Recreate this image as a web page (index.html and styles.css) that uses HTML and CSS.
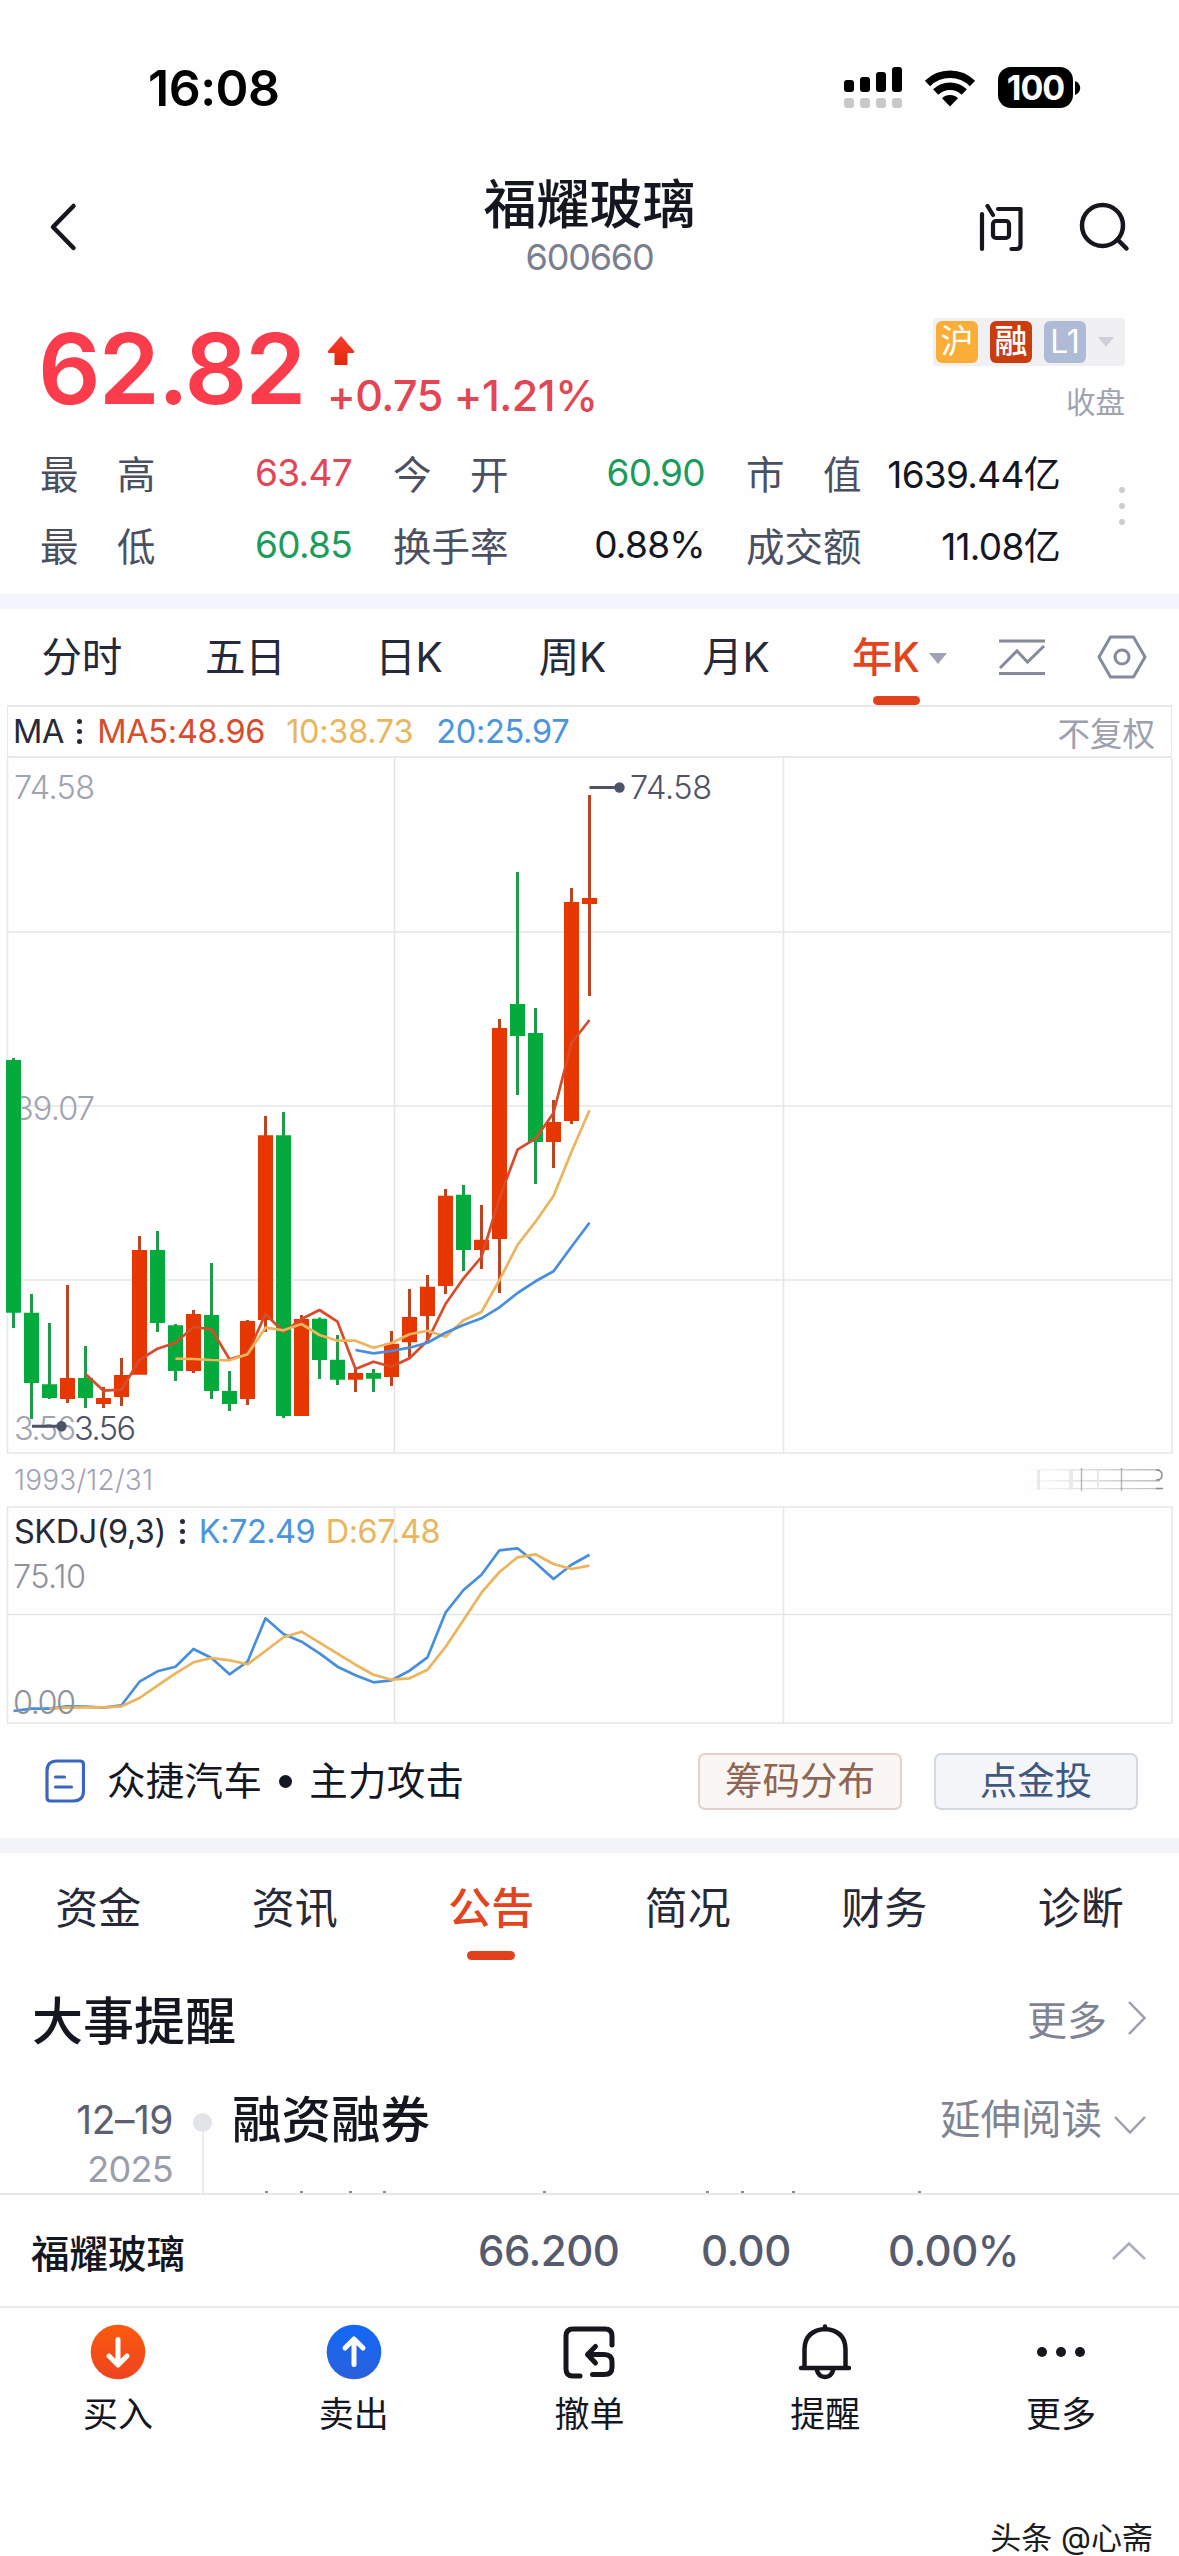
FILE: index.html
```html
<!DOCTYPE html>
<html lang="zh-CN">
<head>
<meta charset="utf-8">
<title>福耀玻璃 600660</title>
<link rel="stylesheet" href="styles.css">
</head>
<body>
<div class="app">
  <div class="status">
    <span class="clock">16:08</span>
    <div class="status-icons">
      <svg class="signal" width="58" height="41" viewBox="0 0 58 41">
        <rect x="0" y="13" width="10" height="12" rx="3"/><rect x="16" y="10" width="10" height="15" rx="3"/><rect x="32" y="5" width="10" height="20" rx="3"/><rect x="48" y="0" width="10" height="25" rx="3"/>
        <g fill="#c8c8c8"><rect x="0" y="31" width="10" height="10" rx="3"/><rect x="16" y="31" width="10" height="10" rx="3"/><rect x="32" y="31" width="10" height="10" rx="3"/><rect x="48" y="31" width="10" height="10" rx="3"/></g>
      </svg>
      <svg class="wifi" width="52" height="38" viewBox="0 0 52 38">
        <g fill="none" stroke="#000" stroke-width="7.5"><path d="M3.5 14.5a32 32 0 0 1 45 0"/><path d="M11.7 23a20.5 20.5 0 0 1 28.6 0"/></g>
        <path d="M26 37.5l-8-8.2a11.5 11.5 0 0 1 16 0z"/>
      </svg>
      <div class="battery">100</div>
      <svg class="nub" width="6" height="14" viewBox="0 0 6 14"><path d="M0 0c7 3 7 11 0 14z"/></svg>
    </div>
  </div>

  <header class="header">
    <svg class="back" width="30" height="50" viewBox="0 0 30 50"><path d="M25.500 4L5 25l20.500 21" fill="none" stroke="#15171c" stroke-width="4.500" stroke-linecap="round" stroke-linejoin="round"/></svg>
    <div class="title"><h1>福耀玻璃</h1><span>600660</span></div>
    <div class="header-tools">
      <svg width="48" height="50" viewBox="0 0 48 50" fill="none" stroke="#15171c" stroke-width="4.200" stroke-linecap="round" stroke-linejoin="round"><path d="M5 12v35M10.500 4l5.500 9M21 7h22.500v36q0 4-4 4h-5"/><rect x="16" y="19" width="16" height="17" rx="3"/></svg>
      <svg width="52" height="50" viewBox="0 0 52 50" fill="none" stroke="#15171c" stroke-width="4.500" stroke-linecap="round"><circle cx="23.500" cy="23.500" r="20.500"/><path d="M38.500 37.500l9 9"/></svg>
    </div>
  </header>

  <section class="quote">
    <div class="quote-top">
      <div class="price">62.82</div>
      <div class="change">
        <svg width="28" height="31" viewBox="0 0 28 31"><defs><linearGradient id="up" x2="0" y2="1"><stop offset="0" stop-color="#ff3b30"/><stop offset="1" stop-color="#dc2a08"/></linearGradient></defs><path d="M14 0l13 15q1 2-2 2h-4.500v12h-13V17H3q-3 0-2-2z" fill="url(#up)"/></svg>
        <span>+0.75 +1.21%</span>
      </div>
      <div class="quote-side">
        <div class="tags"><i class="tag hu">沪</i><i class="tag rong">融</i><i class="tag lv">L1</i><b class="tri"></b></div>
        <span>收盘</span>
      </div>
    </div>
    <div class="stats">
      <div class="stat"><span>最　高</span><b class="up">63.47</b></div>
      <div class="stat"><span>今　开</span><b class="down">60.90</b></div>
      <div class="stat"><span>市　值</span><b>1639.44亿</b></div>
      <div class="stat"><span>最　低</span><b class="down">60.85</b></div>
      <div class="stat"><span>换手率</span><b>0.88%</b></div>
      <div class="stat"><span>成交额</span><b>11.08亿</b></div>
      <div class="more-dots"><i></i><i></i><i></i></div>
    </div>
  </section>

  <nav class="periods">
    <span>分时</span><span>五日</span><span>日K</span><span>周K</span><span>月K</span><span class="on">年K<b class="tri"></b></span>
    <svg class="trend" width="48" height="40" viewBox="0 0 48 40" fill="none" stroke="#858a9c" stroke-width="3"><path d="M1 4h46M1 36.500h46M2 31l17-17 10.500 11L46 9"/></svg>
    <svg class="hex" width="50" height="44" viewBox="0 0 50 44" fill="none" stroke="#858a9c" stroke-width="3" stroke-linejoin="round"><path d="M13.500 2h23L48 22 36.500 42h-23L2 22z"/><circle cx="25" cy="22" r="7"/></svg>
  </nav>

  <div class="legend">
    <span class="l-name">MA</span><span class="vdots"><i></i><i></i><i></i></span>
    <span class="l-ma5">MA5:48.96</span><span class="l-ma10">10:38.73</span><span class="l-ma20">20:25.97</span>
    <span class="l-adj">不复权</span>
  </div>

  <svg class="chart" width="1179" height="748" viewBox="0 758 1179 748">
    <g class="grid"><path d="M7.500 757V1453H1172V757M7 932H1172M7 1106H1172M7 1280H1172M394.500 758V1453M783.500 758V1453"/></g>
    <g class="axis">
      <text x="14" y="799" textLength="81">74.58</text>
      <text x="14" y="1120" textLength="81">39.07</text>
      <text x="14" y="1439.500" textLength="62">3.56</text>
      <text class="date" x="14" y="1490" textLength="139">1993/12/31</text>
    </g>
    <g class="wick red"><path d="M67.500 1285V1403M103.500 1387V1408M121.500 1358V1406M139.500 1236V1374M193.500 1310V1373M247.500 1320V1405M265.500 1116V1332M301.500 1315V1416M355.500 1369V1392M391.500 1331V1386M409.500 1289V1358M427.500 1275V1340M445.500 1189V1294M481.500 1205V1269M499.500 1019V1293M553.500 1100V1168M571.500 888V1124M589.500 795V996"/></g>
    <g class="wick green"><path d="M13.500 1058V1328M31.500 1294V1419M49.500 1323V1399M85.500 1346V1408M157.500 1231V1332M175.500 1324V1381M211.500 1263V1399M229.500 1371V1411M283.500 1112V1418M319.500 1317.500V1379M337.500 1335V1385M373.500 1369V1392M463.500 1185V1271M517.500 872V1095M535.500 1008V1184"/></g>
    <g class="body red"><path d="M67.500 1378V1399M103.500 1398V1404M121.500 1375V1397M139.500 1250V1374.700M193.500 1314V1371M247.500 1321V1399M265.500 1135.300V1320M301.500 1319V1416M355.500 1373V1379.700M391.500 1343.700V1377M409.500 1317V1342.300M427.500 1286.700V1316M445.500 1195.700V1286M481.500 1239.700V1250M499.500 1028V1239M553.500 1122V1142M571.500 902V1121M589.500 898V904"/></g>
    <g class="body green"><path d="M13.500 1060V1312.700M31.500 1312.700V1383M49.500 1384.300V1398M85.500 1378V1398M157.500 1250V1323M175.500 1325.300V1371M211.500 1315V1391M229.500 1391V1404M283.500 1135.300V1416M319.500 1318.700V1360M337.500 1359.700V1379.700M373.500 1373V1378.700M463.500 1194.700V1250M517.500 1004V1036M535.500 1033V1142"/></g>
    <g class="line">
      <polyline stroke="#d84b2b" points="85.500,1374 103.500,1390.700 121.500,1389.700 139.500,1360 157.500,1348.700 175.500,1342.700 193.500,1327 211.500,1329.300 229.500,1359.300 247.500,1354 265.500,1314 283.500,1332 301.500,1319 319.500,1310 337.500,1321.700 355.500,1369 373.500,1361.700 391.500,1366.700 409.500,1358.300 427.500,1340.700 445.500,1304 463.500,1278.300 481.500,1257 499.500,1198 517.500,1149.700 535.500,1138.700 553.500,1113 571.500,1043 589.500,1020"/>
      <polyline stroke="#ecb45c" points="175.500,1358.700 193.500,1359 211.500,1360 229.500,1360.300 247.500,1354.300 265.500,1327.700 283.500,1330.300 301.500,1324 319.500,1335 337.500,1340.700 355.500,1340.700 373.500,1347.700 391.500,1343 409.500,1334.300 427.500,1330.700 445.500,1336.700 463.500,1320.300 481.500,1312 499.500,1280 517.500,1245 535.500,1221.700 553.500,1196 571.500,1151.700 589.500,1110.300"/>
      <polyline stroke="#478fdc" points="355.500,1350 373.500,1353.300 391.500,1351 409.500,1347.700 427.500,1342.700 445.500,1332.700 463.500,1325 481.500,1318.300 499.500,1307.300 517.500,1293 535.500,1281.300 553.500,1271.300 571.500,1246.700 589.500,1222.700"/>
    </g>
    <g class="mark">
      <path d="M589.500 787.500H618M32 1426.300H61"/><circle cx="619.500" cy="787.500" r="5.200"/><circle cx="61.500" cy="1426.300" r="5.200"/>
      <text x="630" y="799" textLength="82">74.58</text>
      <text x="74" y="1439.500" textLength="62">3.56</text>
    </g>
    <defs><linearGradient id="fade"><stop offset="0" stop-color="#999" stop-opacity="0"/><stop offset="1" stop-color="#999" stop-opacity=".65"/></linearGradient></defs>
    <g fill="url(#fade)"><rect x="1024" y="1469" width="136" height="1.500"/><rect x="1024" y="1480" width="136" height="1.500"/><rect x="1024" y="1488" width="136" height="1.200"/></g>
    <g fill="none" stroke="#8d8d92" stroke-width="1.500"><path d="M1081.500 1468v23M1121.500 1468v23" opacity=".6"/><path d="M1156 1470q6 0 6 5t-6 5M1156 1488.500h7"/></g>
    <g fill="#e9e9ec"><rect x="1037" y="1470" width="3" height="20"/><rect x="1069" y="1470" width="4" height="20"/><rect x="1097" y="1470" width="2" height="20"/></g>
  </svg>

  <div class="skdj">
    <div class="skdj-legend"><span class="l-name">SKDJ(9,3)</span><span class="vdots"><i></i><i></i><i></i></span><span class="l-k">K:72.49</span><span class="l-d">D:67.48</span></div>
    <svg class="chart" width="1179" height="218" viewBox="0 1506 1179 218">
      <g class="grid"><path d="M7.500 1507H1172V1723H7.500zM7 1614.500H1172M394.500 1507V1723M783.500 1507V1723"/></g>
      <g class="line">
        <polyline stroke="#478fdc" points="13.500,1711 31.500,1708.700 49.500,1708.700 67.500,1706.300 85.500,1706.700 103.500,1707.700 121.500,1705.300 139.500,1681.700 157.500,1671.300 175.500,1666.700 193.500,1649 211.500,1658 229.500,1674.300 247.500,1661.700 265.500,1618.300 283.500,1634 301.500,1641.700 319.500,1653.300 337.500,1666.700 355.500,1675.300 373.500,1682.300 391.500,1680.300 409.500,1670.700 427.500,1657.300 445.500,1612.700 463.500,1590 481.500,1574.700 499.500,1550.300 517.500,1548.300 535.500,1562.700 553.500,1579 571.500,1564.700 589.500,1554.700"/>
        <polyline stroke="#ecb45c" points="49.500,1708.700 67.500,1707.700 85.500,1707.300 103.500,1707.300 121.500,1706.300 139.500,1698 157.500,1685.700 175.500,1673.300 193.500,1662.300 211.500,1658 229.500,1660.300 247.500,1664.300 265.500,1651 283.500,1637.300 301.500,1631.700 319.500,1642.700 337.500,1653.700 355.500,1664.700 373.500,1674.700 391.500,1679.700 409.500,1678.300 427.500,1669.700 445.500,1647 463.500,1620 481.500,1592.700 499.500,1572 517.500,1557.300 535.500,1554.300 553.500,1564 571.500,1569 589.500,1565.700"/>
      </g>
      <g class="axis dark"><text x="13" y="1588" textLength="73">75.10</text><text x="13" y="1714" textLength="63">0.00</text></g>
    </svg>
  </div>

  <div class="news">
    <svg width="40" height="44" viewBox="0 0 40 44" fill="none" stroke="#3c66bd" stroke-width="3.200" stroke-linecap="round"><path d="M12 2h23q3.500 0 3.500 3.500V32q0 10-10 10H5.500Q2 42 2 38.500V12Q2 2 12 2z"/><path d="M10.500 18h9M10.500 28h16"/></svg>
    <span class="news-text">众捷汽车<i></i>主力攻击</span>
    <button class="chip brown">筹码分布</button>
    <button class="chip navy">点金投</button>
  </div>

  <nav class="tabs"><span>资金</span><span>资讯</span><span class="on">公告</span><span>简况</span><span>财务</span><span>诊断</span></nav>

  <div class="section-head"><h2>大事提醒</h2><span>更多</span><svg width="20" height="36" viewBox="0 0 20 36"><path d="M2 2l15.500 16L2 34" fill="none" stroke="#9a9eae" stroke-width="2.500"/></svg></div>

  <div class="event">
    <div class="event-date"><span>12–19</span><small>2025</small></div>
    <div class="rail"><i></i></div>
    <h3>融资融券</h3>
    <span class="read">延伸阅读</span>
    <svg width="34" height="20" viewBox="0 0 34 20"><path d="M2 2l15 15.500L32 2" fill="none" stroke="#9a9eae" stroke-width="2.500"/></svg>
    <svg class="clip" width="700" height="2" viewBox="0 0 700 2"><path d="M15 1h3M50 1h3M99 1h3M133 1h3M293 1h3M456 1h3M491 1h3M542 1h3M668 1h3" stroke="#8a8d96" stroke-width="2"/></svg>
  </div>

  <div class="ticker">
    <strong>福耀玻璃</strong><span class="t1">66.200</span><span class="t2">0.00</span><span class="t3">0.00%</span>
    <svg width="36" height="20" viewBox="0 0 36 20"><path d="M2 18L18 2.500 34 18" fill="none" stroke="#a9adbd" stroke-width="2.500"/></svg>
  </div>

  <nav class="dock">
    <div><svg width="56" height="56" viewBox="0 0 56 56"><defs><linearGradient id="buy" x2="0" y2="1"><stop offset="0" stop-color="#fb5a0d"/><stop offset="1" stop-color="#ee4420"/></linearGradient></defs><circle cx="28" cy="28" r="27.300" fill="url(#buy)"/><path d="M28 15.500v25M19 32l9 9 9-9" fill="none" stroke="#fff" stroke-width="5" stroke-linecap="round" stroke-linejoin="round"/></svg><span>买入</span></div>
    <div><svg width="56" height="56" viewBox="0 0 56 56"><defs><linearGradient id="sell" x2="0" y2="1"><stop offset="0" stop-color="#1168fb"/><stop offset="1" stop-color="#2c60d8"/></linearGradient></defs><circle cx="28" cy="28" r="27.300" fill="url(#sell)"/><path d="M28 40.500v-25M19 24l9-9 9 9" fill="none" stroke="#fff" stroke-width="5" stroke-linecap="round" stroke-linejoin="round"/></svg><span>卖出</span></div>
    <div><svg width="56" height="56" viewBox="0 0 56 56" fill="none" stroke="#15171c" stroke-width="5" stroke-linecap="round"><path d="M19 52H12q-7 0-7-7V12q0-7 7-7h32q7 0 7 7v9"/><path d="M31.500 50.500H43q8 0 8-7V38q0-7.500-8-7.500H28" /><path d="M34.500 22.500l-8 8 8 8.500" stroke-linejoin="round"/></svg><span>撤单</span></div>
    <div><svg width="56" height="56" viewBox="0 0 56 56" fill="none" stroke="#15171c" stroke-width="4.500" stroke-linecap="round" stroke-linejoin="round"><path d="M7.500 43V25Q8 6.500 28 5q20 1.500 20.500 20v18"/><path d="M28 2.500v2M4 44h48M19.500 45q2 8 8.500 8t8.500-8"/></svg><span>提醒</span></div>
    <div><svg width="56" height="56" viewBox="0 0 56 56" fill="#15171c"><circle cx="9" cy="28" r="5"/><circle cx="28" cy="28" r="5"/><circle cx="47" cy="28" r="5"/></svg><span>更多</span></div>
  </nav>
  <footer class="mark-line">头条 @心斋</footer>
</div>
</body>
</html>
```
FILE: styles.css
```css
* { box-sizing: border-box; margin: 0; padding: 0; }
body { background: #fff; }
i { font-style: normal; }
svg { display: block; flex: none; }
.app {
  width: 1179px; height: 2556px; overflow: hidden; background: #fefefe; color: #14171f;
  font-family: Inter, "Noto Sans CJK SC", sans-serif; white-space: nowrap;
}

.status { height: 175px; padding: 0 98px 0 148px; display: flex; align-items: center; justify-content: space-between; }
.clock { font-size: 50px; font-weight: 600; line-height: 60px; color: #000; letter-spacing: -0.5px; }
.status-icons { display: flex; align-items: center; }
.wifi { margin: 0 22px; }
.battery { width: 75px; height: 41px; border-radius: 13px; background: #000; color: #fff; font-size: 34px; font-weight: 700; line-height: 41px; text-align: center; letter-spacing: -1px; }
.nub { margin-left: 2px; }

.header { height: 104px; display: grid; grid-template-columns: 200px 1fr 200px; align-items: center; padding: 0 48px; }
.title { display: flex; flex-direction: column; align-items: center; }
.title h1 { font-size: 53px; font-weight: 500; line-height: 60px; }
.title span { font-size: 36px; line-height: 44px; color: #7a7f8e; letter-spacing: -1.2px; }
.header-tools { display: flex; justify-content: flex-end; gap: 54px; }

.quote { height: 330px; border-bottom: 15px solid #f4f5fc; }
.quote-top { height: 157px; display: flex; padding: 0 54px 0 38px; align-items: flex-start; }
.price { width: 289px; padding-top: 42px; font-size: 98px; font-weight: 600; line-height: 96px; color: #fa3c4c; letter-spacing: -2px; }
.change { padding-top: 57px; color: #e24553; }
.change span { display: block; margin-top: 2px; font-size: 43px; font-weight: 500; line-height: 52px; letter-spacing: -0.5px; }
.quote-side { margin-left: auto; padding-top: 39px; display: flex; flex-direction: column; align-items: flex-end; }
.quote-side span { margin-top: 16px; font-size: 29.5px; line-height: 40px; color: #9fa3b1; }
.tags { width: 192px; height: 48px; padding: 0 3px; display: flex; align-items: center; gap: 12px; background: #f0f0f3; border-radius: 3px; }
.tag { width: 42px; height: 42px; border-radius: 6px; color: #fff; font-size: 33px; line-height: 41px; text-align: center; }
.hu { background: #fbae37; }
.rong { background: #c93d10; font-weight: 500; }
.lv { background: #aebad6; font-size: 32px; }
.tri { width: 0; height: 0; border: 9px solid transparent; border-top: 11px solid #9fa2b5; border-bottom: 0; }
.tags .tri { border-width: 10px 8px 0; border-top-color: #cfd0d8; }
.stats { position: relative; padding-left: 40px; display: grid; grid-template-columns: 312px 312px 314px; grid-auto-rows: 72px; column-gap: 41px; }
.stat { display: flex; align-items: center; justify-content: space-between; font-size: 38.500px; }
.stat span { color: #4b5061; }
.stat b { font-weight: 400; letter-spacing: -0.7px; font-size: 37px; }
.stat .up { color: #e24553; }
.stat .down { color: #1b9c5c; }
.more-dots { position: absolute; left: 1119px; top: 51px; display: grid; gap: 10px; }
.more-dots i { width: 6px; height: 6px; border-radius: 3px; background: #cbccd0; }

.periods { height: 96px; display: flex; align-items: center; }
.periods span { width: 163.500px; padding-top: 2px; text-align: center; font-size: 40.500px; line-height: 94px; height: 96px; color: #262a38; letter-spacing: -0.3px; }
.periods .on { position: relative; display: flex; align-items: center; justify-content: center; gap: 9px; color: #e3431d; font-weight: 500; }
.periods .on::after { content: ""; position: absolute; left: 55px; bottom: 0; width: 47px; height: 9px; border-radius: 4.500px; background: #e3401d; }
.trend { margin-left: 17px; }
.hex { margin-left: 51px; }

.legend { height: 53px; margin: 0 7px; border: 2px solid #e6e9ea; border-bottom: 0; display: flex; align-items: center; padding: 0 16px 0 5px; font-size: 32.500px; letter-spacing: -0.3px; border-width: 2px 1px 2px; border-bottom: 2px solid #e6e8ea; }
.l-name { color: #262a38; }
.vdots { display: grid; gap: 5px; }
.vdots i { width: 5px; height: 5px; border-radius: 50%; background: #262a38; }
.legend .vdots { margin: 0 15px 0 13px; }
.l-ma5 { color: #d84b2b; width: 189px; }
.l-ma10 { color: #e9b660; width: 150px; }
.l-ma20 { color: #4a95df; }
.l-adj { margin-left: auto; color: #9da1af; letter-spacing: 0; }

.chart .grid { fill: none; stroke: #e5e6e9; stroke-width: 1.600; }
.axis { font-size: 32.500px; font-weight: 300; fill: #a0a3b1; }
.axis.dark { fill: #8f929b; }
.axis .date { font-size: 28px; }
.wick { fill: none; stroke-width: 3; }
.body { fill: none; stroke-width: 15; }
.wick.red { stroke: #bd4420; }
.wick.green { stroke: #1e9b49; }
.body.red { stroke: #e63700; }
.body.green { stroke: #04aa3b; }
.line { fill: none; stroke-width: 2.700; stroke-linejoin: round; }
.mark path { stroke: #4d5366; stroke-width: 3; }
.mark { fill: #4d5366; }
.mark text { font-size: 32.500px; font-weight: 300; }

.skdj { position: relative; height: 218px; }
.skdj-legend { position: absolute; left: 14px; top: 5px; height: 40px; display: flex; align-items: center; font-size: 32.500px; letter-spacing: -0.5px; }
.skdj-legend .vdots { margin: 0 14px; }
.l-k { color: #4a95df; width: 127px; }
.l-d { color: #e9b660; }

.news { height: 129px; padding: 0 41px 0 45px; border-bottom: 15px solid #f3f4f7; display: flex; align-items: center; }
.news-text { margin-left: 22px; margin-right: auto; display: flex; align-items: center; font-size: 38.500px; line-height: 50px; letter-spacing: 0.3px; }
.news-text i { width: 13px; height: 13px; margin: 0 17px; border-radius: 50%; background: #14171f; }
.chip { width: 204px; height: 57px; margin-left: 32px; border: 2px solid; border-radius: 7px; font: 400 37.500px/50px Inter, "Noto Sans CJK SC", sans-serif; }
.brown { color: #8f6553; background: #faf6f4; border-color: #e0d2cd; }
.navy { color: #3f587f; background: #f3f5f9; border-color: #d3d8e2; }

.tabs { height: 110px; display: grid; grid-template-columns: repeat(6, 1fr); text-align: center; font-size: 43px; line-height: 110px; color: #262a38; }
.tabs .on { position: relative; color: #e3431d; font-weight: 500; }
.tabs .on::after { content: ""; position: absolute; left: 50%; bottom: 3px; width: 48px; height: 9px; margin-left: -24px; border-radius: 4.500px; background: #e3401d; }

.section-head { height: 110px; padding: 0 32px; display: flex; align-items: center; }
.section-head h2 { margin-right: auto; font-size: 51px; font-weight: 500; }
.section-head span { margin-right: 20px; font-size: 40px; color: #7f8494; }

.event { position: relative; height: 120px; padding: 0 32px 0 0; display: flex; align-items: flex-start; }
.event-date { width: 173px; padding-top: 23px; display: flex; flex-direction: column; align-items: flex-end; line-height: 48px; font-size: 39px; color: #5a6072; letter-spacing: -0.5px; }
.event-date small { font-size: 36px; color: #9a9eab; line-height: 50px; letter-spacing: -0.7px; }
.rail { width: 59px; height: 120px; padding-top: 40px; display: flex; flex-direction: column; align-items: center; }
.rail i { width: 19px; height: 19px; border-radius: 50%; background: #e3e4ea; }
.rail::after { content: ""; flex: 1; width: 2px; background: #ececf0; }
.event h3 { margin-right: auto; font-size: 49.500px; font-weight: 500; line-height: 94px; }
.read { margin-right: 11px; font-size: 40.500px; line-height: 94px; color: #7f8494; }
.event > svg { margin-top: 42px; }
.event > .clip { position: absolute; left: 250px; bottom: 0; margin: 0; }

.ticker { height: 115px; border-top: 2px solid #e6e7ea; border-bottom: 2px solid #e9eaec; padding: 0 32px 0 31px; display: flex; align-items: center; }
.ticker strong { width: 447px; font-size: 38.500px; font-weight: 500; }
.ticker span { font-size: 42px; font-weight: 500; color: #565c6e; letter-spacing: -0.5px; }
.t1 { width: 223px; }
.t2 { width: 187px; }
.ticker svg { margin-left: auto; }

.dock { padding-top: 16px; display: grid; grid-template-columns: repeat(5, 1fr); }
.dock div { display: flex; flex-direction: column; align-items: center; }
.dock span { margin-top: 9px; font-size: 35px; line-height: 50px; }
.mark-line { margin-top: 77px; padding-right: 26px; text-align: right; font-size: 31px; line-height: 44px; color: #1c1c1c; }
```
